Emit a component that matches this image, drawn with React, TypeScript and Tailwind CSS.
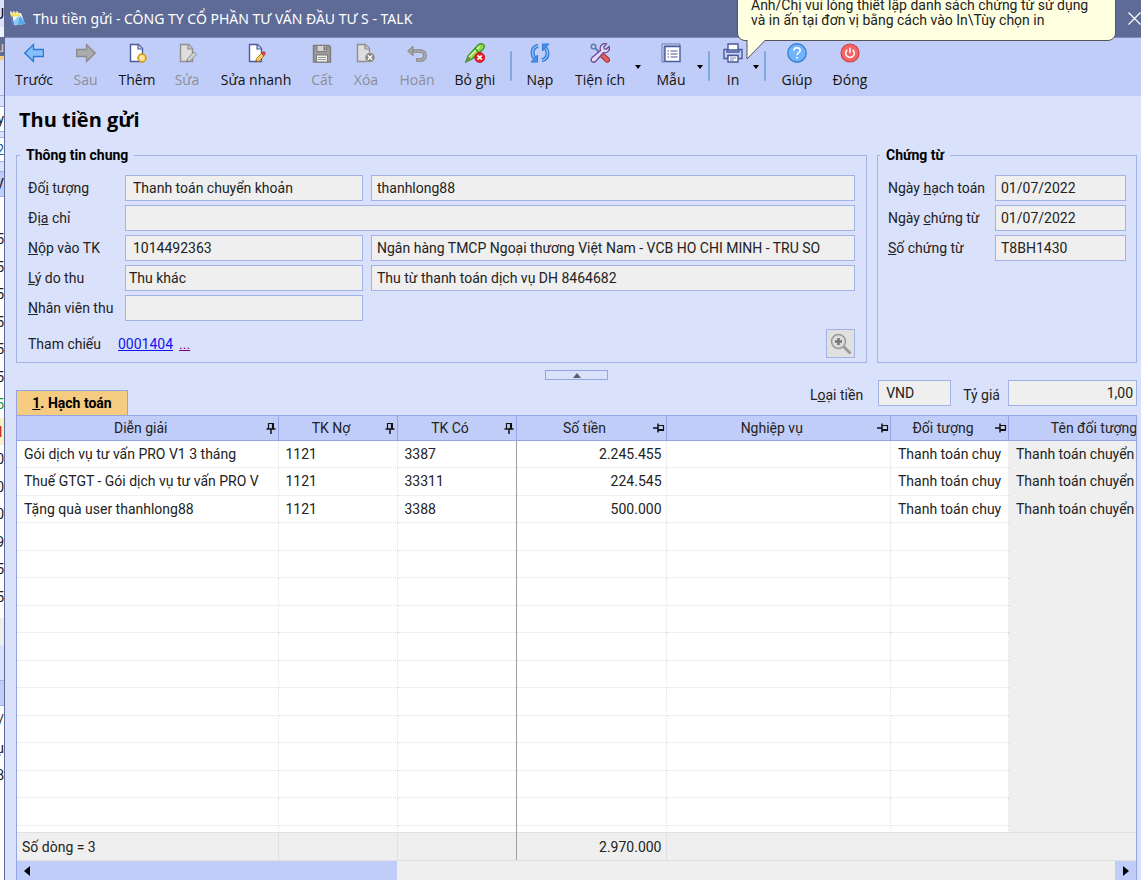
/**
 * Deposit receipt window (Thu tiền gửi)
 * Toolbar, general information, voucher information and the posting grid
 */

import type { ReactNode } from 'react';

type ToolItem = {
  label?: string;
  icon?: ReactNode;
  width?: string;
  disabled?: boolean;
  kind?: 'sep' | 'arrow';
};

const PAGE = 'M3.5 1.5h8l4 4v13h-12z';

function Icon({ children }: { children: ReactNode }) {
  return (
    <svg viewBox="0 0 20 20" className="h-5 w-5" fill="none" aria-hidden="true">
      {children}
    </svg>
  );
}

function PageShape({ grey }: { grey?: boolean }) {
  const stroke = grey ? '#8f8f8f' : '#4a5a9c';
  return (
    <>
      <path d={PAGE} fill={grey ? '#dedede' : '#ffffff'} stroke={stroke} strokeWidth="1.4" />
      <path d="M11 1.5v4.5h4.5" fill={grey ? '#c8c8c8' : '#c9d4f4'} stroke={stroke} strokeWidth="1.2" />
    </>
  );
}

const icons = {
  prev: (
    <Icon>
      <path d="M.8 10 9.5 1.5v5h10v7h-10v5z" fill="#86c0fb" stroke="#2a78d8" strokeWidth="1.3" />
    </Icon>
  ),
  next: (
    <Icon>
      <path d="M19.2 10 10.5 1.5v5H.7v7h9.8v5z" fill="#ababab" stroke="#8c8c8c" strokeWidth="1.3" />
    </Icon>
  ),
  add: (
    <Icon>
      <PageShape />
      <circle cx="15" cy="15" r="3.8" fill="#fbe8a0" stroke="#d2a01e" strokeWidth="1.8" />
      <path d="M15 10v1.5M15 18.5V20M10 15h1.5M18.5 15H20" stroke="#d2a01e" strokeWidth="1.4" />
    </Icon>
  ),
  edit: (
    <Icon>
      <PageShape grey />
      <path d="m9.5 19 1-3.5 6.500-6.5 2.5 2.5-6.5 6.5z" fill="#cfcfcf" stroke="#8f8f8f" />
      <path d="m9.5 19 .5-2 1.5 1.5z" fill="#6f6f6f" />
    </Icon>
  ),
  quickEdit: (
    <Icon>
      <PageShape />
      <path d="m9.5 19 1-3.5 5-5 2.5 2.5-5 5z" fill="#fbcb62" stroke="#b07a22" />
      <path d="m15.5 10.5 1.5-1.5q1-.7 1.8.2t.2 1.8L17.8 12.8z" fill="#e04848" stroke="#b83838" />
      <path d="m9.5 19 .5-2 1.5 1.5z" fill="#5a3c1c" />
    </Icon>
  ),
  save: (
    <Icon>
      <path d="M1.5 2.5H17l1.5 1.5v15h-17z" fill="#9a9a9a" stroke="#7c7c7c" strokeWidth="1.4" />
      <path d="M5 2.5h9.5v6H5z" fill="#d4d4d4" stroke="#7c7c7c" />
      <path d="M11.5 3.5h2v4h-2z" fill="#777777" />
      <path d="M4.5 12h11v7h-11z" fill="#eeeeee" stroke="#7c7c7c" />
      <path d="M6 14.5h8M6 16.5h8" stroke="#9a9a9a" />
    </Icon>
  ),
  remove: (
    <Icon>
      <g transform="translate(-2 0)">
        <PageShape grey />
      </g>
      <circle cx="14" cy="14.5" r="5" fill="#858585" stroke="#e0e0e0" strokeWidth=".6" />
      <path d="m11.8 12.3 4.4 4.4m0-4.4-4.4 4.4" stroke="#ffffff" strokeWidth="1.5" />
    </Icon>
  ),
  undo: (
    <Icon>
      <path d="M3 8h10.5q4.5.5 4.5 4.5T14 17H9" stroke="#858585" strokeWidth="3.6" />
      <path d="M3 8h10.5q4.5.5 4.5 4.5T14 17h-4.5" stroke="#adadad" strokeWidth="1.6" />
      <path d="M.7 8 6 3.2v9.6z" fill="#a4a4a4" stroke="#858585" />
    </Icon>
  ),
  unpost: (
    <Icon>
      <path d="M.8 19 3 13 13.5 1.5Q17-.3 19 2.2q.8 2-1 4L7 16z" fill="#8fdc4c" stroke="#3b9020" strokeWidth="1.3" />
      <path d="M4 14 14.5 3.5" stroke="#dcf8b8" strokeWidth="1.5" />
      <path d="m9.5 5 4.5 4.5" stroke="#3b9020" strokeWidth="1.2" />
      <path d="M.8 19 3 13l3 3z" fill="#6c8f54" />
      <circle cx="14.7" cy="14.5" r="5" fill="#ea1c24" stroke="#b81018" strokeWidth=".8" />
      <path d="m12.5 12.3 4.4 4.4m0-4.4-4.4 4.4" stroke="#ffffff" strokeWidth="1.7" />
    </Icon>
  ),
  reload: (
    <Icon>
      <path d="M8 2.8Q2.5 4 2.5 9.8q0 3.2 2.7 6.2" stroke="#2f79d9" strokeWidth="4" />
      <path d="M8 2.8Q2.5 4 2.5 9.8q0 3.2 2.7 6.2" stroke="#82bdf8" strokeWidth="1.6" />
      <path d="M7.5 12v7H1z" fill="#4a92ea" stroke="#2f79d9" />
      <path d="M12 17.2q5.5-1.2 5.5-7 0-3.2-2.7-6.2" stroke="#2f79d9" strokeWidth="4" />
      <path d="M12 17.2q5.5-1.2 5.5-7 0-3.2-2.7-6.2" stroke="#82bdf8" strokeWidth="1.6" />
      <path d="M12.5 8V1H19z" fill="#4a92ea" stroke="#2f79d9" />
    </Icon>
  ),
  tools: (
    <Icon>
      <circle cx="3.5" cy="3.5" r="2.3" stroke="#5c7cb4" strokeWidth="1.5" />
      <path d="m5 5 7 7" stroke="#5c7cb4" strokeWidth="2" />
      <path d="m12.5 12.5 4.8 4.3" stroke="#a02c34" strokeWidth="5.6" strokeLinecap="round" />
      <path d="m12.5 12.5 4.8 4.3" stroke="#e65b5b" strokeWidth="3.6" strokeLinecap="round" />
      <path
        d="M10.5 7.500q-1.2-3.800 1.300-5.800 2.200-1.600 4.700-.8L13.800 3.800l.5 2 2 .5 2.800-2.800q.9 2.800-.8 4.600-2.200 2.200-5 1.600L5.800 18.200q-1.900 1.900-3.900.3-1.700-2 .2-3.900z"
        fill="#e3daf4"
        stroke="#6e4a94"
        strokeWidth="1.3"
      />
    </Icon>
  ),
  template: (
    <Icon>
      <path d="M1 19V1h18v2H3v16z" fill="#dfe6fa" stroke="#6575b2" strokeWidth="1" />
      <path d="M4 3.5h15v15H4z" fill="#ffffff" stroke="#4a5a9c" strokeWidth="1.4" />
      <path d="M6.500 8H8M9.500 8h7M6.500 11H8M9.500 11h7M6.500 14H8M9.500 14h7" stroke="#4a5a9c" strokeWidth="1.2" />
    </Icon>
  ),
  print: (
    <Icon>
      <path d="M5 1h10v6H5z" fill="#ffffff" stroke="#4a5a9c" strokeWidth="1.4" />
      <path d="M1 6.5h3V9h12V6.500h3v9h-4v-3H5v3H1z" fill="#c6d3f8" stroke="#4a5a9c" strokeWidth="1.4" />
      <path d="M5 12.5h10V19H5z" fill="#ffffff" stroke="#4a5a9c" strokeWidth="1.4" />
      <path d="M7 15h6M7 17h4" stroke="#7886bc" />
    </Icon>
  ),
  help: (
    <Icon>
      <circle cx="10" cy="10" r="9.2" fill="#72b4fb" stroke="#3a80d4" strokeWidth="1.4" />
      <path d="M6.8 7.5q.2-2.8 3.2-2.8t3.2 2.5q0 1.5-1.6 2.5-1.500.9-1.500 2.500" stroke="#ffffff" strokeWidth="1.5" />
      <circle cx="10.1" cy="14.8" r="1" fill="#ffffff" />
    </Icon>
  ),
  close: (
    <Icon>
      <circle cx="10" cy="10" r="9" fill="#f56464" stroke="#cc4444" strokeWidth="1.2" />
      <path d="M7.3 6.8a4.3 4.3 0 1 0 5.4 0M10 4.8V10" stroke="#ffffff" strokeWidth="1.5" />
    </Icon>
  ),
};

const tools: ToolItem[] = [
  { label: 'Trước', icon: icons.prev, width: 'w-[58px]' },
  { label: 'Sau', icon: icons.next, width: 'w-[45px]', disabled: true },
  { label: 'Thêm', icon: icons.add, width: 'w-[58px]' },
  { label: 'Sửa', icon: icons.edit, width: 'w-[42px]', disabled: true },
  { label: 'Sửa nhanh', icon: icons.quickEdit, width: 'w-[96px]' },
  { label: 'Cất', icon: icons.save, width: 'w-[36px]', disabled: true },
  { label: 'Xóa', icon: icons.remove, width: 'w-[52px]', disabled: true },
  { label: 'Hoãn', icon: icons.undo, width: 'w-[50px]', disabled: true },
  { label: 'Bỏ ghi', icon: icons.unpost, width: 'w-[66px]' },
  { kind: 'sep' },
  { label: 'Nạp', icon: icons.reload, width: 'w-[56px]' },
  { label: 'Tiện ích', icon: icons.tools, width: 'w-[64px]' },
  { kind: 'arrow' },
  { label: 'Mẫu', icon: icons.template, width: 'ml-1 w-[46px]' },
  { kind: 'arrow' },
  { kind: 'sep' },
  { label: 'In', icon: icons.print, width: 'ml-1.5 w-[34px]' },
  { kind: 'arrow' },
  { kind: 'sep' },
  { label: 'Giúp', icon: icons.help, width: 'w-[62px]' },
  { label: 'Đóng', icon: icons.close, width: 'w-[44px]' },
];

// Edge of the list window that lies behind this one
const behind = [
  { h: 'h-[27px]', look: 'bg-[#dae1fb] text-black', text: 'U' },
  { h: 'h-[10px]', look: 'bg-[#eef1fc]', text: '' },
  { h: 'h-[19px]', look: 'bg-[#5e6b97] text-[#e0c8b0]', text: 'u' },
  { h: 'h-[4px]', look: 'bg-[#f4cb80]', text: '' },
  { h: 'h-[36px]', look: 'bg-[#dae1fb] border-b border-[#a3b2e6]', text: '' },
  { h: 'h-[11px]', look: 'bg-[#dae1fb] border-b border-[#a3b2e6]', text: '' },
  { h: 'h-[24px]', look: 'bg-white text-[#222222]', text: 'y' },
  { h: 'h-[7px]', look: 'bg-[#dae1fb] border-y border-[#a3b2e6]', text: '' },
  { h: 'h-[23px]', look: 'bg-white text-[#1d5fae]', text: '2' },
  { h: 'h-[11px]', look: 'bg-[#dae1fb] border-y border-[#a3b2e6]', text: '' },
  { h: 'h-[25px]', look: 'bg-[#c1cdf9] text-[#222222] border-b border-[#a3b2e6]', text: 'V' },
  { h: 'h-[28px]', look: 'bg-white', text: '' },
  { h: 'h-[28px]', look: 'bg-white text-[#222222]', text: '5' },
  { h: 'h-[27px]', look: 'bg-white text-[#222222]', text: '5' },
  { h: 'h-[28px]', look: 'bg-white text-[#222222]', text: '5' },
  { h: 'h-[27px]', look: 'bg-white text-[#222222]', text: '5' },
  { h: 'h-[28px]', look: 'bg-white text-[#222222]', text: '5' },
  { h: 'h-[27px]', look: 'bg-white text-[#222222]', text: '5' },
  { h: 'h-[28px]', look: 'bg-white text-[#1b9a3a]', text: '5' },
  { h: 'h-[27px]', look: 'bg-[#fdf0c4] text-[#b02020]', text: '1' },
  { h: 'h-[28px]', look: 'bg-white text-[#222222]', text: '0' },
  { h: 'h-[27px]', look: 'bg-white text-[#222222]', text: '0' },
  { h: 'h-[28px]', look: 'bg-white text-[#222222]', text: '0' },
  { h: 'h-[27px]', look: 'bg-white text-[#222222]', text: '9' },
  { h: 'h-[28px]', look: 'bg-white text-[#222222]', text: '5' },
  { h: 'h-[27px]', look: 'bg-white text-[#222222]', text: '5' },
  { h: 'h-[8px]', look: 'bg-white', text: '' },
  { h: 'h-[27px]', look: 'bg-[#efefef]', text: '' },
  { h: 'h-[36px]', look: 'bg-[#dae1fb] border-b border-[#a3b2e6]', text: '' },
  { h: 'h-[25px]', look: 'bg-[#c1cdf9] border-b border-[#a3b2e6]', text: '' },
  { h: 'h-[28px]', look: 'bg-white text-[#222222]', text: '/' },
  { h: 'h-[27px]', look: 'bg-white text-[#222222]', text: 'ụ' },
  { h: 'h-[28px]', look: 'bg-white text-[#222222]', text: '8' },
];

const columns = [
  { title: 'Diễn giải', pin: 'down' },
  { title: 'TK Nợ', pin: 'down' },
  { title: 'TK Có', pin: 'down' },
  { title: 'Số tiền', pin: 'side' },
  { title: 'Nghiệp vụ', pin: 'side' },
  { title: 'Đối tượng', pin: 'side' },
  { title: 'Tên đối tượng', pin: '' },
];

const entries = [
  ['Gói dịch vụ tư vấn PRO V1 3 tháng', '1121', '3387', '2.245.455', '', 'Thanh toán chuy', 'Thanh toán chuyển'],
  ['Thuế GTGT - Gói dịch vụ tư vấn PRO V', '1121', '33311', '224.545', '', 'Thanh toán chuy', 'Thanh toán chuyển'],
  ['Tặng quà user thanhlong88', '1121', '3388', '500.000', '', 'Thanh toán chuy', 'Thanh toán chuyển'],
];

const blank = ['', '', '', '', '', '', ''];
const rows = [...entries, ...Array.from({ length: 27 }, () => blank)];

const cellLook = [
  'pl-[7px]',
  'pl-[7px]',
  'pl-[7px]',
  'pr-1 text-right',
  'pl-[7px]',
  'pl-[7px]',
  'pl-[7px] bg-[#efefef]',
];

function Pin({ side }: { side?: boolean }) {
  return (
    <svg viewBox="0 0 12 12" className="h-3 w-3 shrink-0" fill="none" aria-hidden="true">
      <g transform={side ? 'rotate(90 6 6)' : undefined} stroke="#111111">
        <path d="M3.5 7V1.5h4V7" strokeWidth="1.2" />
        <path d="M8 1v6" strokeWidth="2" />
        <path d="M1.5 7h9" strokeWidth="1.5" />
        <path d="M6 7v5" strokeWidth="1.5" />
      </g>
    </svg>
  );
}

function Columns() {
  return (
    <colgroup>
      <col className="w-[261px]" />
      <col className="w-[119px]" />
      <col className="w-[119px]" />
      <col className="w-[150px]" />
      <col />
      <col className="w-[118px]" />
      <col className="w-[172px]" />
    </colgroup>
  );
}

function Field({
  id,
  value,
  className,
}: {
  id: string;
  value: string;
  className: string;
}) {
  return (
    <input
      id={id}
      type="text"
      aria-label={id}
      value={value}
      readOnly
      className={`h-[26px] min-w-0 border border-[#a3b2e6] bg-[#efefef] text-[#222222] outline-none ${className}`}
    />
  );
}

function Toolbar() {
  return (
    <div className="flex h-[58px] shrink-0 items-start bg-[#c1cdf9] font-['Open_Sans','Noto_Sans',sans-serif]">
      {tools.map((tool, i) => {
        if (tool.kind === 'sep') {
          return <div key={i} className="mt-[13px] ml-0.5 h-[30px] w-[2px] shrink-0 rounded bg-[#80aadf]" />;
        }
        if (tool.kind === 'arrow') {
          return (
            <button key={i} type="button" aria-label="Mở danh sách" className="flex h-[58px] w-[12px] shrink-0 justify-center pt-[27px]">
              <svg viewBox="0 0 6 4" className="h-1 w-1.5" aria-hidden="true">
                <path d="M0 0h6L3 4z" fill="#000000" />
              </svg>
            </button>
          );
        }
        return (
          <button
            key={i}
            type="button"
            disabled={tool.disabled}
            className={`flex shrink-0 flex-col items-center gap-[7px] pt-[5px] text-sm leading-5 whitespace-nowrap text-[#111111] disabled:text-[#8b8d98] ${tool.width}`}
          >
            {tool.icon}
            {tool.label}
          </button>
        );
      })}
    </div>
  );
}

function Balloon() {
  return (
    <div className="absolute top-[-11px] right-[25px] z-10 w-[379px] rounded-lg border border-[#55555a] bg-[#ffffe1] px-[13px] pt-2 pb-3 text-sm leading-[15px] whitespace-nowrap text-[#222222]">
      <p>Anh/Chị vui lòng thiết lập danh sách chứng từ sử dụng</p>
      <p>và in ấn tại đơn vị bằng cách vào In\Tùy chọn in</p>
      <svg viewBox="0 0 20 20" className="absolute top-full left-2 h-5 w-5" aria-hidden="true">
        <path d="M1 0v19L19 0z" fill="#ffffe1" />
        <path d="M1 0v19L19 .5" fill="none" stroke="#55555a" />
      </svg>
    </div>
  );
}

function GeneralInfo() {
  return (
    <fieldset className="min-w-0 flex-1 border border-[#a3b2e6] px-[11px] pb-1">
      <legend className="-ml-2 px-1.5 text-sm leading-5 font-bold text-black">Thông tin chung</legend>
      <div className="grid grid-cols-[97px_238px_1fr] items-center gap-y-1 pt-2.5">
        <label htmlFor="doi-tuong">Đố<u>i</u> tượng</label>
        <Field id="doi-tuong" value="Thanh toán chuyển khoản" className="px-[7px]" />
        <Field id="ten-doi-tuong" value="thanhlong88" className="ml-2 px-[5px]" />

        <label htmlFor="dia-chi">Đị<u>a</u> chỉ</label>
        <Field id="dia-chi" value="" className="col-span-2 px-[7px]" />

        <label htmlFor="nop-vao-tk"><u>N</u>ộp vào TK</label>
        <Field id="nop-vao-tk" value="1014492363" className="px-[7px]" />
        <Field id="ten-ngan-hang" value="Ngân hàng TMCP Ngoại thương Việt Nam - VCB HO CHI MINH - TRU SO" className="ml-2 px-[5px]" />

        <label htmlFor="ly-do-thu"><u>L</u>ý do thu</label>
        <Field id="ly-do-thu" value="Thu khác" className="px-[3px]" />
        <Field id="dien-giai" value="Thu từ thanh toán dịch vụ DH 8464682" className="ml-2 px-[5px]" />

        <label htmlFor="nhan-vien-thu"><u>N</u>hân viên thu</label>
        <Field id="nhan-vien-thu" value="" className="px-[7px]" />
      </div>
      <div className="mt-2 flex items-center">
        <span className="w-[90px]">Tham chiếu</span>
        <a href="#0001404" className="text-[#1414f0] underline">0001404</a>
        <a href="#tham-chieu" className="ml-1.5 text-[#800080] underline">...</a>
        <button
          type="button"
          aria-label="Xem"
          className="ml-auto flex h-[29px] w-[29px] items-center justify-center border border-[#a3b2e6] bg-[#e0e0e0]"
        >
          <svg viewBox="0 0 22 22" className="h-[22px] w-[22px]" fill="none" aria-hidden="true">
            <path d="m13.5 13.5 7 7" stroke="#9a9a9a" strokeWidth="3" />
            <circle cx="8.5" cy="8.5" r="7" fill="#dcdcdc" stroke="#9a9a9a" strokeWidth="1.5" />
            <path d="M8.5 5v7M5 8.500h7" stroke="#777777" strokeWidth="2.5" />
          </svg>
        </button>
      </div>
    </fieldset>
  );
}

function VoucherInfo() {
  return (
    <fieldset className="w-[260px] shrink-0 border border-[#a3b2e6] px-2.5 pb-1">
      <legend className="-ml-2 px-1.5 text-sm leading-5 font-bold text-black">Chứng từ</legend>
      <div className="grid grid-cols-[107px_131px] items-center gap-y-1 pt-2.5">
        <label htmlFor="ngay-hach-toan">Ngày <u>h</u>ạch toán</label>
        <Field id="ngay-hach-toan" value="01/07/2022" className="px-[5px]" />
        <label htmlFor="ngay-chung-tu">Ngày <u>c</u>hứng từ</label>
        <Field id="ngay-chung-tu" value="01/07/2022" className="px-[5px]" />
        <label htmlFor="so-chung-tu"><u>S</u>ố chứng từ</label>
        <Field id="so-chung-tu" value="T8BH1430" className="px-[5px]" />
      </div>
    </fieldset>
  );
}

function PostingGrid() {
  return (
    <div className="flex min-h-0 flex-1 flex-col overflow-hidden border-x border-t border-[#93a5e4] bg-white">
      <div className="min-h-0 flex-1 overflow-hidden">
        <table className="w-[calc(100%+45px)] table-fixed border-collapse whitespace-nowrap">
          <Columns />
          <thead>
            <tr className="h-[24px] bg-[#c1cdf9]">
              {columns.map((col) => (
                <th key={col.title} className="border-r border-b border-[#93a5e4] p-0 font-normal">
                  <div className="flex items-center pr-px">
                    <span className="flex-1 text-center">{col.title}</span>
                    {col.pin && <Pin side={col.pin === 'side'} />}
                  </div>
                </th>
              ))}
            </tr>
          </thead>
          <tbody>
            {rows.map((row, r) => (
              <tr key={r} className="odd:h-[27px] even:h-[28px]">
                {row.map((cell, c) => (
                  <td
                    key={c}
                    className={`overflow-hidden border-b border-b-[#e2e2e2] py-0 [border-bottom-style:dotted] ${
                      c === 2 ? 'border-r border-r-[#a0a0a0]' : 'border-r border-r-[#e2e2e2] [border-right-style:dotted]'
                    } ${cellLook[c]}`}
                  >
                    {cell}
                  </td>
                ))}
              </tr>
            ))}
          </tbody>
        </table>
      </div>

      <table className="w-[calc(100%+45px)] shrink-0 table-fixed border-collapse bg-[#efefef]">
        <Columns />
        <tbody>
          <tr className="h-[28px]">
            <td className="border border-l-0 border-[#e0e0e0] py-0 pl-[5px]">Số dòng = 3</td>
            <td className="border border-[#e0e0e0]" />
            <td className="border border-[#e0e0e0] border-r-[#a0a0a0]" />
            <td className="border border-[#e0e0e0] py-0 pr-1 text-right">2.970.000</td>
            <td className="border-y border-[#e0e0e0]" colSpan={3} />
          </tr>
        </tbody>
      </table>

      <div className="flex h-[19px] shrink-0 justify-between bg-[#efefef]">
        <button type="button" aria-label="Cuộn trái" className="flex w-[380px] items-center bg-[#c1cdf9] pl-[7px]">
          <svg viewBox="0 0 6 10" className="h-2.5 w-1.5" aria-hidden="true">
            <path d="M6 0v10L0 5z" fill="#000000" />
          </svg>
        </button>
        <button type="button" aria-label="Cuộn phải" className="flex w-[21px] items-center justify-center bg-[#c1cdf9]">
          <svg viewBox="0 0 6 10" className="h-2.5 w-1.5" aria-hidden="true">
            <path d="M0 0v10l6-5z" fill="#000000" />
          </svg>
        </button>
      </div>
    </div>
  );
}

export default function App() {
  return (
    <div className="flex h-screen overflow-hidden bg-[#dae1fb] font-['Roboto','Liberation_Sans',sans-serif] text-sm leading-5 text-[#222222]">
      <div className="w-1 shrink-0 overflow-hidden bg-white" aria-hidden="true">
        {behind.map((strip, i) => (
          <div key={i} className={`flex items-center justify-end overflow-hidden ${strip.h} ${strip.look}`}>
            {strip.text}
          </div>
        ))}
      </div>

      <div className="flex min-w-0 flex-1 flex-col border-l border-[#5e6b97]">
        <div className="relative flex h-[38px] shrink-0 items-center border-b border-[#7f8cba] bg-[#5e6b97] pl-1 text-white">
          <svg viewBox="0 0 18 16" className="mr-1.5 h-4 w-[18px]" aria-hidden="true">
            <path d="M3 2h9l4 11-11 1z" fill="#e8f4fd" />
            <path d="M9.500 5 16.5 12.500 6 14.5l-1.500-4z" fill="#8cc8f2" />
            <path d="M11 4.5 16.500 12.500 9 14z" fill="#58a8e8" />
            <path d="M1 1.5h9l1.5 4H2z" fill="#f7df62" />
            <path d="M2 0v3M5 0v3M8 0v3" stroke="#ffffff" />
            <path d="m2 6 2.5 8" stroke="#5b80da" strokeWidth="1.5" />
          </svg>
          <h1 className="font-['Noto_Sans',sans-serif]">Thu tiền gửi - CÔNG TY CỔ PHẦN TƯ VẤN ĐẦU TƯ S - TALK</h1>
          <button type="button" aria-label="Đóng cửa sổ" className="ml-auto w-[13px] overflow-hidden">
            <svg viewBox="0 0 13 13" className="h-[13px] w-[13px]" aria-hidden="true">
              <path d="m.5.5 12 12m0-12-12 12" stroke="#ffffff" strokeWidth="1.2" />
            </svg>
          </button>
          <Balloon />
        </div>

        <Toolbar />

        <div className="flex min-h-0 flex-1 flex-col pr-1 pl-[11px]">
          <h2 className="h-[49px] shrink-0 pl-[3px] font-['Open_Sans','Noto_Sans',sans-serif] text-xl leading-[48px] font-bold text-black">
            Thu tiền gửi
          </h2>

          <div className="flex shrink-0 gap-2.5">
            <GeneralInfo />
            <VoucherInfo />
          </div>

          <button
            type="button"
            aria-label="Thu gọn"
            className="mt-[7px] flex h-[10px] w-[63px] shrink-0 items-center justify-center self-center border border-[#93a5e4]"
          >
            <svg viewBox="0 0 8 5" className="h-[5px] w-2" aria-hidden="true">
              <path d="M4 0l4 5H0z" fill="#5c6070" />
            </svg>
          </button>

          <div className="flex h-[35px] shrink-0 items-start">
            <button
              type="button"
              className="h-[25px] w-[112px] self-end border border-b-0 border-[#93a5e4] bg-[#f4cb80] font-bold text-black"
            >
              <u>1</u>. Hạch toán
            </button>
            <label htmlFor="loai-tien" className="mr-[15px] ml-auto pt-[5px]">L<u>o</u>ại tiền</label>
            <Field id="loai-tien" value="VND" className="w-[73px] px-[7px]" />
            <label htmlFor="ty-gia" className="mr-2 ml-3 pt-[5px]">Tỷ <u>g</u>iá</label>
            <Field id="ty-gia" value="1,00" className="w-[129px] px-[3px] text-right" />
          </div>

          <PostingGrid />
        </div>
      </div>
    </div>
  );
}
